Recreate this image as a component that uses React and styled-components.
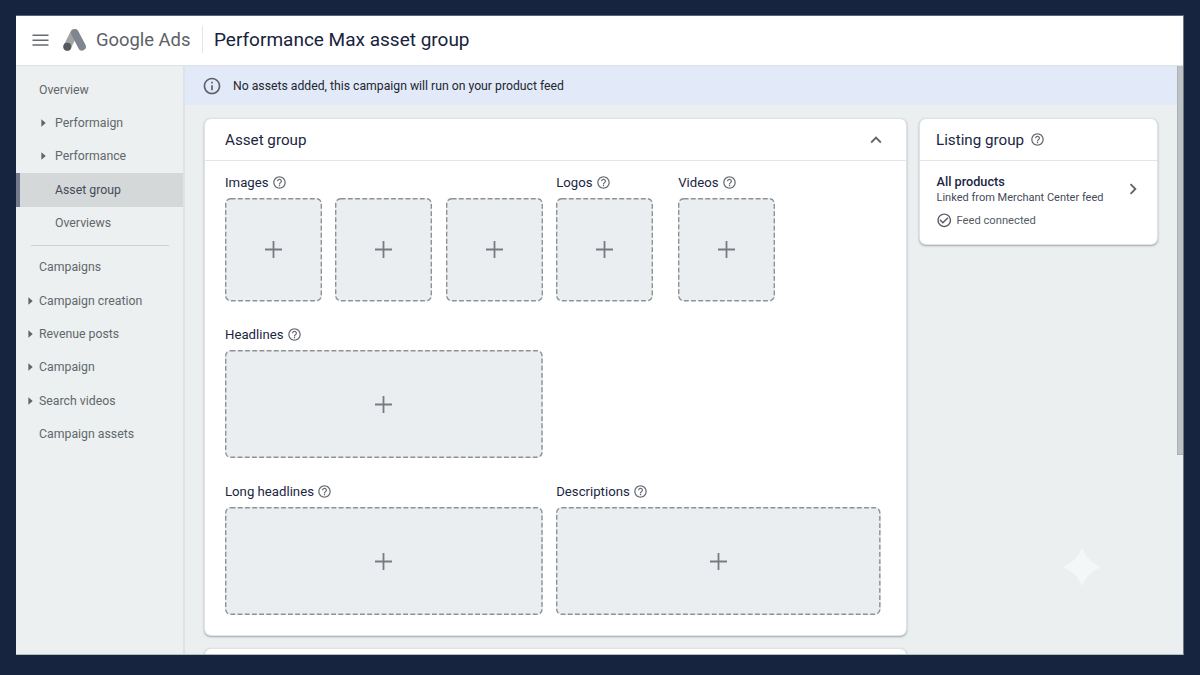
import React from "react";
import styled, { createGlobalStyle } from "styled-components";
import {
  MdCheckCircleOutline,
  MdChevronRight,
  MdExpandLess,
  MdHelpOutline,
  MdInfoOutline,
} from "react-icons/md";

const GlobalStyle = createGlobalStyle`
  * {
    box-sizing: border-box;
  }

  body {
    margin: 0;
    background: #16243f;
    font-family: Roboto, "Liberation Sans", sans-serif;
    color: #1b2642;
  }

  svg {
    display: block;
    flex: none;
  }
`;

const Frame = styled.div`
  height: 675px;
  padding: 15px 16px 20px;
  overflow: hidden;
`;

const Window = styled.div`
  position: relative;
  display: flex;
  flex-direction: column;
  width: 1168px;
  height: 640px;
  overflow: hidden;
  background: #ebeff0;
  border-top: 1px solid #56617a;
  border-right: 1px solid #6c7880;
  border-bottom: 1px solid #b4bcbe;
`;

const Header = styled.header`
  display: flex;
  align-items: center;
  flex: none;
  height: 50px;
  padding: 0 0 2px 16px;
  background: #ffffff;
  border-bottom: 1px solid #dfe3e5;
`;

const Brand = styled.div`
  display: flex;
  align-items: center;
  width: 139px;
  margin-left: 14px;
  padding-bottom: 1px;
  font-size: 18.4px;
  color: #5c6166;

  svg {
    margin: 1px 8px 0 -1px;
  }
`;

const Title = styled.h1`
  margin: 0;
  padding-left: 11px;
  border-left: 1px solid #e2e6e8;
  font-size: 19px;
  font-weight: 400;
  line-height: 27px;
  color: #17223d;
`;

const Content = styled.div`
  display: flex;
  flex: 1;
  min-height: 0;
`;

const Sidebar = styled.nav`
  flex: none;
  width: 169px;
  padding-top: 7px;
  background: #ecf0f1;
  border-right: 2px solid #dfe3e6;
`;

const NavItem = styled.div`
  display: flex;
  align-items: center;
  height: 33.4px;
  padding-left: ${(props) => (props.$nested ? 25 : 11.5)}px;
  font-size: 12.3px;
  color: ${(props) => (props.$active ? "#444a5a" : "#62676b")};
  background: ${(props) => (props.$active ? "#d4d8d9" : "transparent")};
  box-shadow: ${(props) => (props.$active ? "inset 4px 0 0 #757a8c" : "none")};
`;

const CaretSlot = styled.span`
  width: ${(props) => (props.$nested ? 14 : 11.5)}px;
`;

const NavDivider = styled.hr`
  height: 1px;
  margin: 5px 14px 4.5px 15px;
  border: 0;
  background: #cdd2d4;
`;

const Main = styled.main`
  display: flex;
  flex-direction: column;
  flex: 1;
  min-width: 0;
`;

const Banner = styled.div`
  display: flex;
  align-items: center;
  flex: none;
  gap: 11px;
  height: 39px;
  padding-left: 17px;
  background: #e2e9f9;
  font-size: 12.22px;
  color: #23272e;

  svg {
    color: #5d6269;
  }
`;

const Cards = styled.div`
  display: flex;
  align-items: flex-start;
  gap: 14px;
  padding: 14px 0 0 20px;
`;

const CardColumn = styled.div`
  display: flex;
  flex-direction: column;
  gap: 14px;
`;

const Card = styled.section`
  width: ${(props) => props.$width}px;
  height: ${(props) => props.$height}px;
  background: #ffffff;
  border-radius: 6px;
  box-shadow: 0 0 0 1px #dfe3e6, 0 1px 2px 0.5px rgba(90, 98, 104, 0.5);
`;

const CardHeader = styled.div`
  display: flex;
  align-items: center;
  gap: 5.5px;
  height: 42px;
  padding: 0 19px 0 ${(props) => props.$inset}px;
  border-bottom: 1px solid #e2e6e8;
  font-size: 15.2px;

  svg {
    color: #63686e;
  }
`;

const CollapseButton = styled.span`
  margin-left: auto;
`;

const CardBody = styled.div`
  display: flex;
  flex-direction: column;
  padding: 13px 20px 0;
`;

const FieldRow = styled.div`
  display: flex;
  margin-bottom: 25.5px;
`;

const Field = styled.div`
  margin-right: ${(props) => props.$gap || 13.5}px;
`;

const FieldLabel = styled.div`
  display: flex;
  align-items: center;
  gap: 3.5px;
  height: 16px;
  margin-bottom: 7.5px;
  font-size: 13.2px;

  svg {
    color: #686d74;
  }
`;

const Slots = styled.div`
  display: flex;
  gap: 13.35px;
`;

const Slot = styled.div`
  position: relative;
  display: flex;
  align-items: center;
  justify-content: center;
  width: ${(props) => props.$width}px;
  height: ${(props) => props.$height}px;
  background: #eaeef0;
  border-radius: 6px;
  color: #787c82;
`;

const DashedOutline = styled.svg`
  position: absolute;
  inset: 0;
  width: 100%;
  height: 100%;
  overflow: visible;
`;

const Listing = styled.div`
  display: flex;
  align-items: flex-start;
  justify-content: space-between;
  padding: 13px 13px 0 16.5px;

  > svg {
    margin-top: 4px;
    color: #5d6269;
  }
`;

const ListingName = styled.div`
  font-size: 12.7px;
  font-weight: 500;
  line-height: 16px;
`;

const ListingSource = styled.div`
  font-size: 11.03px;
  line-height: 16px;
  color: #454b58;
`;

const ListingStatus = styled.div`
  display: flex;
  align-items: center;
  gap: 4.5px;
  height: 17px;
  margin: 6px 0 0 -1px;
  font-size: 11.2px;
  color: #565b64;
`;

const Scrollbar = styled.div`
  flex: none;
  width: 6px;
  height: 389px;
  background: #bfc2c4;
  border-left: 1px solid #adb1b3;
  border-bottom: 1px solid #adb1b3;
`;

const Sparkle = styled.svg`
  position: absolute;
  left: 1046px;
  top: 531px;
`;

const navItems = [
  { label: "Overview" },
  { label: "Performaign", nested: true, caret: true },
  { label: "Performance", nested: true, caret: true },
  { label: "Asset group", nested: true, active: true },
  { label: "Overviews", nested: true },
  { divider: true },
  { label: "Campaigns" },
  { label: "Campaign creation", caret: true },
  { label: "Revenue posts", caret: true },
  { label: "Campaign", caret: true },
  { label: "Search videos", caret: true },
  { label: "Campaign assets" },
];

const MenuIcon = () => (
  <svg width="17" height="14" viewBox="0 0 17 14">
    <path
      d="M0.5 2.3H16.5M0.5 7.2H16.5M0.5 12H16.5"
      stroke="#666b70"
      strokeWidth="1.5"
    />
  </svg>
);

const AdsLogo = () => (
  <svg width="26" height="24" viewBox="0 0 26 24">
    <path
      d="M12.2 5L5.4 18.6"
      stroke="#a3a4a2"
      strokeWidth="7.8"
      strokeLinecap="round"
    />
    <path
      d="M12.9 5L20 18.6"
      stroke="#80868f"
      strokeWidth="7.8"
      strokeLinecap="round"
    />
    <circle cx="5.3" cy="18.7" r="4" fill="#55585c" />
  </svg>
);

const Caret = () => (
  <svg width="5" height="8" viewBox="0 0 5 8">
    <path d="M0.4 0.3L4.7 4L0.4 7.7Z" fill="#5f6468" />
  </svg>
);

const PlusIcon = () => (
  <svg width="17" height="17" viewBox="0 0 17 17">
    <path d="M0 8.5H17M8.5 0V17" stroke="currentColor" strokeWidth="1.8" />
  </svg>
);

const AddSlot = ({ width, height }) => (
  <Slot $width={width} $height={height}>
    <DashedOutline>
      <rect
        x="0.7"
        y="0.7"
        width={width - 1.4}
        height={height - 1.4}
        rx="5"
        fill="none"
        stroke="#8d9296"
        strokeWidth="1.4"
        strokeDasharray="4.8 2.4"
      />
    </DashedOutline>
    <PlusIcon />
  </Slot>
);

const AssetField = ({ label, count = 1, width, height, gap }) => (
  <Field $gap={gap}>
    <FieldLabel>
      {label}
      <MdHelpOutline size={15} />
    </FieldLabel>
    <Slots>
      {Array.from({ length: count }, (_, i) => (
        <AddSlot key={i} width={width} height={height} />
      ))}
    </Slots>
  </Field>
);

const renderNavItem = (item, index) => {
  if (item.divider) {
    return <NavDivider key={index} />;
  }
  return (
    <NavItem key={index} $nested={item.nested} $active={item.active}>
      <CaretSlot $nested={item.nested}>{item.caret && <Caret />}</CaretSlot>
      {item.label}
    </NavItem>
  );
};

export default function App() {
  return (
    <Frame>
      <GlobalStyle />
      <Window>
        <Header>
          <MenuIcon />
          <Brand>
            <AdsLogo />
            Google Ads
          </Brand>
          <Title>Performance Max asset group</Title>
        </Header>
        <Content>
          <Sidebar>{navItems.map(renderNavItem)}</Sidebar>
          <Main>
            <Banner>
              <MdInfoOutline size={20} />
              No assets added, this campaign will run on your product feed
            </Banner>
            <Cards>
              <CardColumn>
                <Card $width={701} $height={516}>
                  <CardHeader $inset={20}>
                    Asset group
                    <CollapseButton>
                      <MdExpandLess size={22} />
                    </CollapseButton>
                  </CardHeader>
                  <CardBody>
                    <FieldRow>
                      <AssetField label="Images" count={3} width={97} height={103.5} />
                      <AssetField label="Logos" width={97} height={103.5} gap={25} />
                      <AssetField label="Videos" width={97} height={103.5} />
                    </FieldRow>
                    <FieldRow>
                      <AssetField label="Headlines" width={317.7} height={108} />
                    </FieldRow>
                    <FieldRow>
                      <AssetField label="Long headlines" width={317.7} height={108} />
                      <AssetField label="Descriptions" width={324.5} height={108} />
                    </FieldRow>
                  </CardBody>
                </Card>
                <Card $width={701} $height={60} />
              </CardColumn>
              <Card $width={237} $height={125}>
                <CardHeader $inset={16}>
                  Listing group
                  <MdHelpOutline size={15} />
                </CardHeader>
                <Listing>
                  <div>
                    <ListingName>All products</ListingName>
                    <ListingSource>Linked from Merchant Center feed</ListingSource>
                    <ListingStatus>
                      <MdCheckCircleOutline size={16.5} />
                      Feed connected
                    </ListingStatus>
                  </div>
                  <MdChevronRight size={22} />
                </Listing>
              </Card>
            </Cards>
          </Main>
          <Scrollbar />
        </Content>
        <Sparkle width="40" height="40" viewBox="0 0 40 40">
          <path
            d="M20 1Q25.5 14.5 39 20Q25.5 25.5 20 39Q14.5 25.5 1 20Q14.5 14.5 20 1Z"
            fill="#f4f7f7"
          />
        </Sparkle>
      </Window>
    </Frame>
  );
}
